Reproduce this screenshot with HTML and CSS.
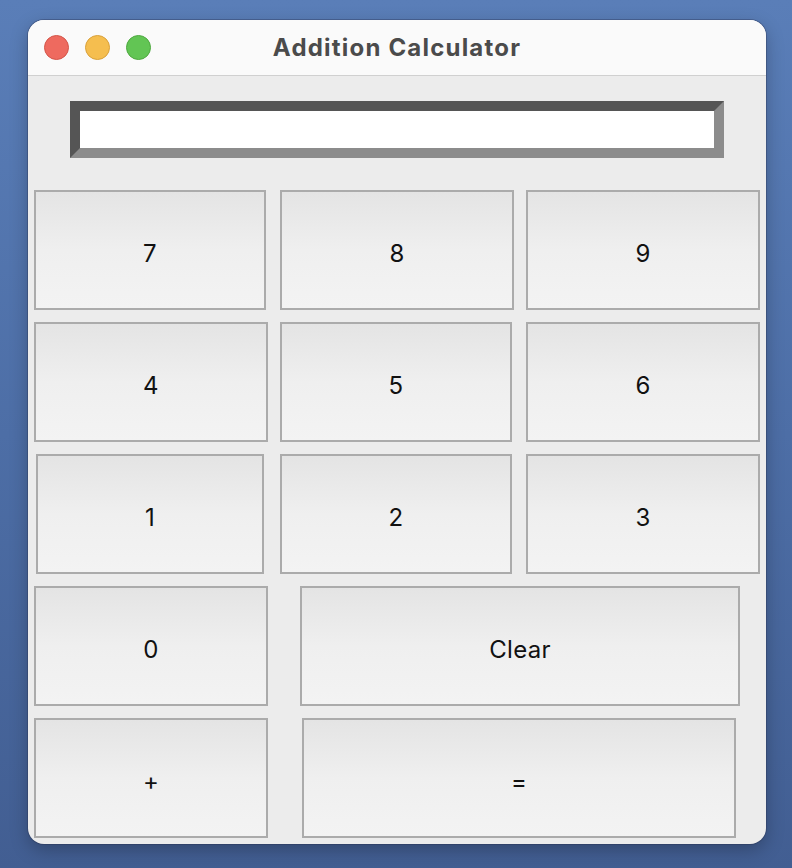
FILE: index.html
```html
<!DOCTYPE html>
<html>
<head>
<meta charset="utf-8">
<title>Addition Calculator</title>
<link rel="stylesheet" href="styles.css">
</head>
<body>
<div class="window">
  <div class="titlebar">
    <div class="lights">
      <span class="light red"></span>
      <span class="light yellow"></span>
      <span class="light green"></span>
    </div>
    <div class="title">Addition Calculator</div>
  </div>
  <div class="content">
    <div class="entry"><div class="entry-inner"></div></div>
    <div class="pad">
      <div class="row">
        <div class="btn b-a">7</div>
        <div class="btn b-b">8</div>
        <div class="btn b-c">9</div>
      </div>
      <div class="row">
        <div class="btn b-d">4</div>
        <div class="btn b-e">5</div>
        <div class="btn b-g">6</div>
      </div>
      <div class="row">
        <div class="btn b-f">1</div>
        <div class="btn b-e">2</div>
        <div class="btn b-g">3</div>
      </div>
      <div class="row">
        <div class="btn b-d">0</div>
        <div class="btn b-clear">Clear</div>
      </div>
      <div class="row">
        <div class="btn b-d">+</div>
        <div class="btn b-eq">=</div>
      </div>
    </div>
  </div>
</div>
</body>
</html>
```
FILE: styles.css
```css
html, body {
  margin: 0;
  padding: 0;
}
body {
  width: 792px;
  height: 868px;
  overflow: hidden;
  background: linear-gradient(180deg, #5a7eb8 0%, #4d6ea6 50%, #425e92 100%);
  font-family: Inter, "Liberation Sans", sans-serif;
  padding-top: 20px;
  box-sizing: border-box;
}
.window {
  margin-left: 28px;
  width: 738px;
  height: 824px;
  border-radius: 16px;
  overflow: hidden;
  background: #ececec;
  box-shadow: 0 0 0 1px rgba(40, 50, 80, 0.35), 0 6px 18px rgba(0, 0, 0, 0.25);
}
.titlebar {
  position: relative;
  height: 55px;
  background: #fafafa;
  border-bottom: 1px solid #d0d0d0;
  display: flex;
  align-items: center;
  justify-content: center;
}
.lights {
  position: absolute;
  left: 16px;
  top: 15px;
  display: flex;
  gap: 16px;
}
.light {
  width: 23px;
  height: 23px;
  border-radius: 50%;
  display: block;
}
.red { background: #ee6a5f; border: 0.5px solid #d35549; }
.yellow { background: #f5be4f; border: 0.5px solid #d8a03a; }
.green { background: #62c554; border: 0.5px solid #4ea83f; }
.title {
  font-weight: 700;
  font-size: 24px;
  letter-spacing: 1.2px;
  color: #4b4b4b;
  margin-left: 0;
}
.content {
  padding-top: 25px;
}
.entry {
  margin-left: 42px;
  width: 654px;
  height: 57px;
  box-sizing: border-box;
  border-style: solid;
  border-width: 10px;
  border-color: #555555 #8c8c8c #8c8c8c #555555;
  background: #ffffff;
}
.pad {
  margin-top: 32px;
  display: flex;
  flex-direction: column;
  gap: 12px;
}
.row {
  display: flex;
  height: 120px;
}
.btn {
  box-sizing: border-box;
  height: 120px;
  padding-top: 6px;
  border: 2px solid #ababab;
  background: linear-gradient(180deg, #e4e4e4 0%, #efefef 50%, #f3f3f3 100%);
  display: flex;
  align-items: center;
  justify-content: center;
  font-size: 24px;
  letter-spacing: 0.3px;
  color: #111;
}
.b-a { margin-left: 6px; width: 232px; }
.b-b { margin-left: 14px; width: 234px; }
.b-c { margin-left: 12px; width: 234px; }
.b-g { margin-left: 14px; width: 234px; }
.b-d { margin-left: 6px; width: 234px; }
.b-e { margin-left: 12px; width: 232px; }
.b-f { margin-left: 8px; width: 228px; margin-right: 4px; }
.b-clear { margin-left: 32px; width: 440px; }
.b-eq { margin-left: 34px; width: 434px; }
```
